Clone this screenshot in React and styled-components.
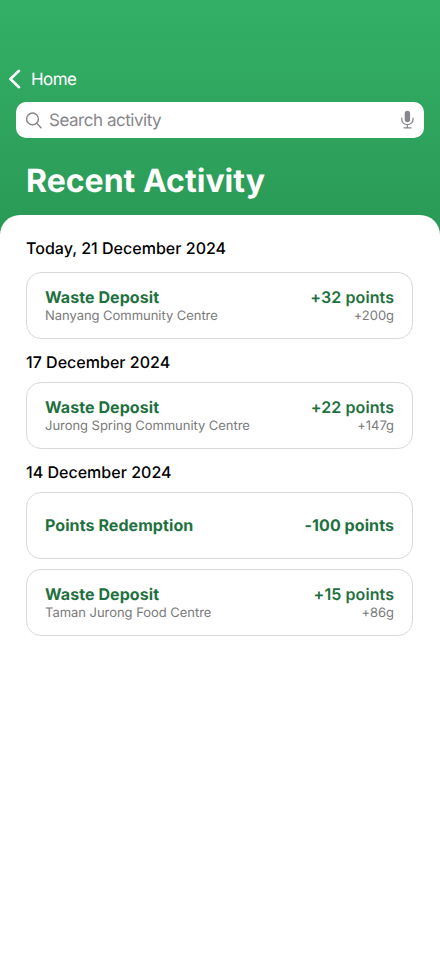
import React from "react";
import styled, { createGlobalStyle } from "styled-components";

const Global = createGlobalStyle`
  *, *::before, *::after { box-sizing: border-box; }
  body {
    margin: 0;
    background: #fff;
    font-family: Inter, "Liberation Sans", sans-serif;
    text-rendering: geometricPrecision;
  }
`;

const Screen = styled.main`
  display: flex;
  flex-direction: column;
  width: 440px;
  height: 956px;
  overflow: hidden;
  background: linear-gradient(180deg, #33b066 0, #2a9956 240px);
`;

const Header = styled.header`
  height: 215px;
  padding-top: 68px;
  color: #fff;
`;

const BackLink = styled.div`
  display: flex;
  align-items: center;
  gap: 10px;
  height: 22px;
  padding-left: 8px;
  font-size: 17px;
  line-height: 22px;
  letter-spacing: -0.55px;
  svg { display: block; }
`;

const BackLabel = styled.span`
  padding-top: 2px;
`;

const SearchField = styled.div`
  display: flex;
  align-items: center;
  height: 36px;
  margin: 12px 16px 0;
  padding: 0 9px;
  border-radius: 10px;
  background: #fff;
  color: #87868b;
  font-size: 17px;
  line-height: 22px;
  letter-spacing: -0.47px;
  svg { display: block; }
`;

const Placeholder = styled.span`
  flex: 1;
  margin-left: 7px;
  padding-top: 2px;
`;

const Title = styled.h1`
  margin: 22px 26px 0;
  font-size: 32px;
  line-height: 41px;
  font-weight: 700;
  letter-spacing: 0.02px;
`;

const Sheet = styled.section`
  flex: 1;
  padding: 24px 27px 0 26px;
  border-radius: 20px 20px 0 0;
  background: #fff;
`;

const Group = styled.div`
  margin-bottom: 14px;
`;

const DateHeading = styled.h2`
  margin: 0 0 ${(p) => p.$gap}px;
  font-size: 16px;
  line-height: 19px;
  font-weight: 500;
  letter-spacing: 0.02px;
  color: #000;
`;

const Card = styled.article`
  display: flex;
  align-items: center;
  justify-content: space-between;
  height: 67px;
  padding: 0 18px;
  border: 1px solid #d9d9d9;
  border-radius: 15px;
  & + & { margin-top: 10px; }
`;

const Column = styled.div`
  text-align: ${(p) => (p.$end ? "right" : "left")};
`;

const Strong = styled.div`
  font-size: 16px;
  line-height: 19px;
  font-weight: ${(p) => p.$weight};
  letter-spacing: 0.08px;
  color: #1e713e;
`;

const Detail = styled.div`
  margin: 1px 0 -1px;
  font-size: 13px;
  line-height: 16px;
  letter-spacing: -0.04px;
  color: #7a7a7a;
`;

const groups = [
  { date: "Today, 21 December 2024", gap: 14, items: [["Waste Deposit", "+32 points", "Nanyang Community Centre", "+200g"]] },
  { date: "17 December 2024", gap: 10, items: [["Waste Deposit", "+22 points", "Jurong Spring Community Centre", "+147g"]] },
  {
    date: "14 December 2024",
    gap: 10,
    items: [
      ["Points Redemption", "-100 points"],
      ["Waste Deposit", "+15 points", "Taman Jurong Food Centre", "+86g"],
    ],
  },
];

const Chevron = () => (
  <svg width="13" height="20" viewBox="0 0 13 20" fill="none" stroke="#fff" strokeWidth="2.6" strokeLinecap="round" strokeLinejoin="round">
    <path d="M11 1.8 2.4 10l8.6 8.2" />
  </svg>
);

const SearchIcon = () => (
  <svg width="17" height="17" viewBox="0 0 17 17" fill="none" stroke="currentColor" strokeWidth="1.4" strokeLinecap="round">
    <circle cx="7.5" cy="6.9" r="5.9" />
    <path d="m11.7 11.3 4.3 4.5" />
  </svg>
);

const MicIcon = () => (
  <svg width="14" height="20" viewBox="0 0 14 20" fill="none" stroke="currentColor" strokeWidth="1.25" strokeLinecap="round">
    <rect x="3.7" y="0.7" width="5.4" height="11.6" rx="2.7" fill="currentColor" stroke="none" />
    <path d="M0.8 8.2v1.4a5.6 5 0 0 0 11.2 0V8.2M6.4 14.8v3M3 17.8h7" />
  </svg>
);

export default function App() {
  return (
    <>
      <Global />
      <Screen>
        <Header>
          <BackLink>
            <Chevron />
            <BackLabel>Home</BackLabel>
          </BackLink>
          <SearchField>
            <SearchIcon />
            <Placeholder>Search activity</Placeholder>
            <MicIcon />
          </SearchField>
          <Title>Recent Activity</Title>
        </Header>
        <Sheet>
          {groups.map((g) => (
            <Group key={g.date}>
              <DateHeading $gap={g.gap}>{g.date}</DateHeading>
              {g.items.map(([name, points, place, weight]) => (
                <Card key={name}>
                  <Column>
                    <Strong $weight={700}>{name}</Strong>
                    {place && <Detail>{place}</Detail>}
                  </Column>
                  <Column $end>
                    <Strong $weight={place ? 600 : 700}>{points}</Strong>
                    {weight && <Detail>{weight}</Detail>}
                  </Column>
                </Card>
              ))}
            </Group>
          ))}
        </Sheet>
      </Screen>
    </>
  );
}
